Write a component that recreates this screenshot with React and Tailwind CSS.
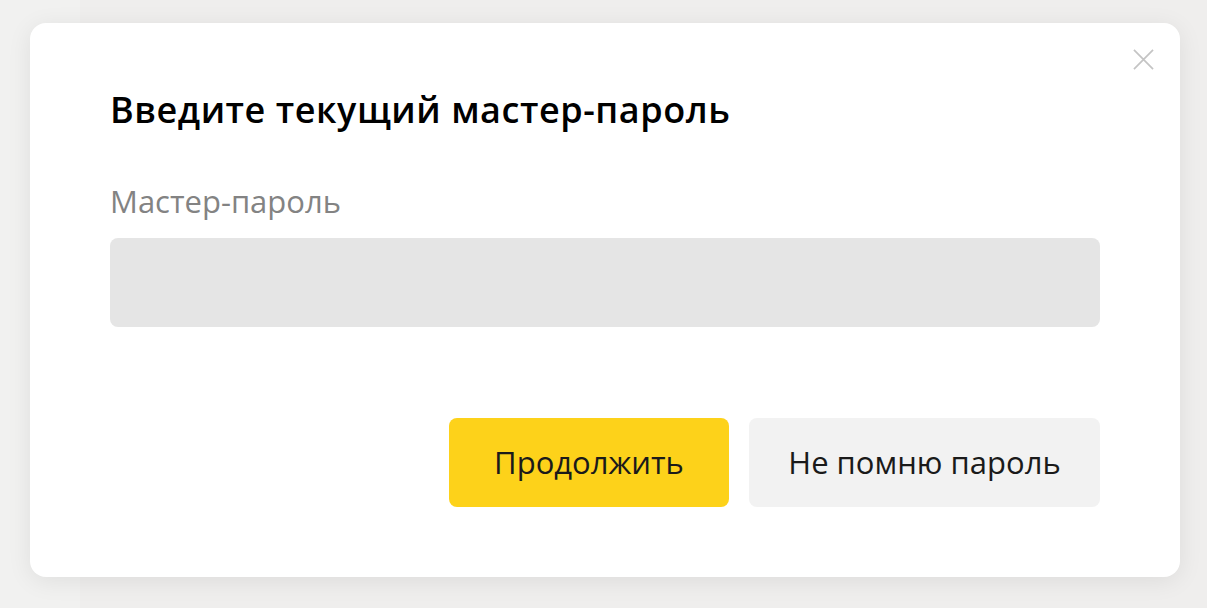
import React from "react";

const App = () => {
  return (
    <div className="relative h-[608px] w-[1207px] overflow-hidden bg-[#efeeed] font-['Open_Sans',sans-serif]">
      <div className="absolute inset-y-0 left-0 w-[80px] bg-[#f1f1f0]" />

      <div className="absolute left-[30px] top-[23px] flex h-[554px] w-[1150px] flex-col rounded-[16px] bg-white px-[80px] shadow-[0_4px_24px_rgba(0,0,0,0.08)]">
        <button className="absolute right-[25px] top-[24px] flex h-[24px] w-[24px] items-center justify-center text-[#c4c4c4]">
          <svg width="21" height="21" viewBox="0 0 22 22" fill="none" stroke="currentColor" strokeWidth="1.8">
            <path d="M1 1L21 21M21 1L1 21" />
          </svg>
        </button>

        <h1 className="mt-[63px] text-[36px] font-semibold leading-[48px] tracking-[0.55px] text-black">
          Введите текущий мастер-пароль
        </h1>

        <label className="mt-[47px] text-[31px] leading-[40px] text-[#838383]">
          Мастер-пароль
        </label>

        <div className="mt-[17px] h-[89px] w-full rounded-[8px] bg-[#e5e5e5]" />

        <div className="mt-[91px] flex justify-end gap-[20px]">
          <button className="flex h-[89px] w-[280px] items-center justify-center rounded-[8px] bg-[#fdd21a] text-[31px] text-[#1a1a1a]">
            Продолжить
          </button>
          <button className="flex h-[89px] w-[351px] items-center justify-center rounded-[8px] bg-[#f2f2f2] text-[31px] text-[#1a1a1a]">
            Не помню пароль
          </button>
        </div>
      </div>
    </div>
  );
};

export default App;
